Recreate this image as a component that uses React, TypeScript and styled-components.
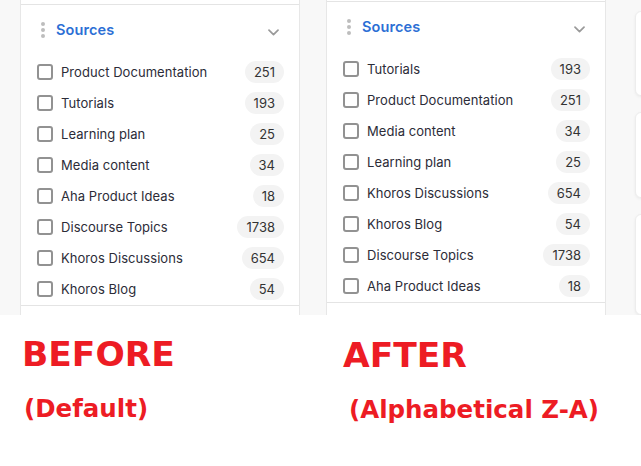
import React from "react";
import styled, { createGlobalStyle } from "styled-components";

const Global = createGlobalStyle`
  html, body { margin: 0; padding: 0; background: #ffffff; }
  body { width: 641px; height: 466px; overflow: hidden; font-family: Inter, "Noto Sans", sans-serif; }
  * { box-sizing: border-box; }
`;

const Page = styled.div`
  width: 641px;
  height: 466px;
  background: #ffffff;
  display: flex;
  flex-direction: column;
`;

const Shots = styled.div`
  display: flex;
  height: 315px;
  background: #f8f8f8;
`;

const Shot = styled.div<{ $left: number; $width?: number }>`
  display: flex;
  height: 100%;
  padding-left: ${(p) => p.$left}px;
  ${(p) => (p.$width ? `width: ${p.$width}px; flex: none;` : "flex: 1;")}
  overflow: hidden;
`;

const Panel = styled.div<{ $top: number }>`
  width: 280px;
  flex: none;
  height: 100%;
  background: #ffffff;
  border-left: 1px solid #e7e7e7;
  border-right: 1px solid #e7e7e7;
  padding-top: ${(p) => p.$top}px;
  display: flex;
  flex-direction: column;
`;

const Section = styled.div`
  border-top: 1px solid #e4e4e4;
  border-bottom: 1px solid #e4e4e4;
`;

const Header = styled.div`
  height: 50px;
  display: flex;
  align-items: center;
  padding: 0 20px 0 20px;
`;

const Dots = styled.span`
  width: 4px;
  display: flex;
  flex-direction: column;
  gap: 2.3px;
  margin-right: 11px;
  & > i {
    width: 4px;
    height: 4px;
    border-radius: 50%;
    background: #bdbdbd;
    display: block;
  }
`;

const Title = styled.span`
  flex: 1;
  color: #2c6fd5;
  font-size: 14.5px;
  font-weight: 600;
  line-height: 20px;
  letter-spacing: 0.1px;
`;

const Chevron = styled.svg`
  width: 11px;
  height: 7px;
  margin-top: 4px;
  flex: none;
`;

const List = styled.ul`
  list-style: none;
  margin: 0;
  padding: 1px 0 1px 0;
`;

const Row = styled.li`
  height: 31px;
  display: flex;
  align-items: center;
  padding: 0 15px 0 16px;
`;

const Box = styled.span`
  width: 16px;
  height: 16px;
  border: 2px solid #929292;
  border-radius: 3px;
  flex: none;
  margin-right: 8px;
`;

const Label = styled.span`
  flex: 1;
  font-size: 13px;
  color: #2c2c38;
  line-height: 18px;
  white-space: nowrap;
  letter-spacing: 0.05px;
`;

const Count = styled.span`
  height: 22px;
  padding: 0 9px;
  border-radius: 11px;
  background: #f3f3f3;
  font-size: 13px;
  color: #333333;
  display: flex;
  align-items: center;
  justify-content: center;
  flex: none;
`;

const Cards = styled.div`
  display: flex;
  flex-direction: column;
  gap: 16px;
  margin-left: 29px;
  padding-top: 11px;
  flex: none;
`;

const Card = styled.div<{ $h: number }>`
  width: 40px;
  height: ${(p) => p.$h}px;
  background: #ffffff;
  border: 1px solid #ededed;
  border-radius: 6px;
  box-shadow: 0 1px 3px rgba(0, 0, 0, 0.06);
`;

const Labels = styled.div`
  display: flex;
  padding-top: 19px;
`;

const LabelGroup = styled.div<{ $left: number; $width?: number; $top?: number }>`
  padding-left: ${(p) => p.$left}px;
  padding-top: ${(p) => p.$top ?? 0}px;
  ${(p) => (p.$width ? `width: ${p.$width}px;` : "")}
  display: flex;
  flex-direction: column;
  color: #ed1c24;
  font-family: "DejaVu Sans", sans-serif;
  font-weight: 700;
`;

const Big = styled.div`
  font-size: 34.5px;
  line-height: 40px;
  white-space: nowrap;
`;

const Sub = styled.div<{ $indent?: number; $gap: number }>`
  font-size: 24.5px;
  line-height: 28px;
  margin-top: ${(p) => p.$gap}px;
  padding-left: ${(p) => p.$indent ?? 0}px;
  white-space: nowrap;
`;

type Item = { name: string; count: number };

const before: Item[] = [
  { name: "Product Documentation", count: 251 },
  { name: "Tutorials", count: 193 },
  { name: "Learning plan", count: 25 },
  { name: "Media content", count: 34 },
  { name: "Aha Product Ideas", count: 18 },
  { name: "Discourse Topics", count: 1738 },
  { name: "Khoros Discussions", count: 654 },
  { name: "Khoros Blog", count: 54 },
];

const after: Item[] = [
  { name: "Tutorials", count: 193 },
  { name: "Product Documentation", count: 251 },
  { name: "Media content", count: 34 },
  { name: "Learning plan", count: 25 },
  { name: "Khoros Discussions", count: 654 },
  { name: "Khoros Blog", count: 54 },
  { name: "Discourse Topics", count: 1738 },
  { name: "Aha Product Ideas", count: 18 },
];

function SourcesPanel({ items, top }: { items: Item[]; top: number }) {
  return (
    <Panel $top={top}>
      <Section>
        <Header>
          <Dots>
            <i />
            <i />
            <i />
          </Dots>
          <Title>Sources</Title>
          <Chevron viewBox="0 0 11 7">
            <path d="M1 1.2 L5.5 5.6 L10 1.2" fill="none" stroke="#9a9a9a" strokeWidth="1.7" strokeLinecap="round" strokeLinejoin="round" />
          </Chevron>
        </Header>
        <List>
          {items.map((it) => (
            <Row key={it.name}>
              <Box />
              <Label>{it.name}</Label>
              <Count>{it.count}</Count>
            </Row>
          ))}
        </List>
      </Section>
    </Panel>
  );
}

export default function App() {
  return (
    <Page>
      <Global />
      <Shots>
        <Shot $left={20} $width={313}>
          <SourcesPanel items={before} top={4} />
        </Shot>
        <Shot $left={13}>
          <SourcesPanel items={after} top={1} />
          <Cards>
            <Card $h={101} />
            <Card $h={102} />
            <Card $h={120} />
          </Cards>
        </Shot>
      </Shots>
      <Labels>
        <LabelGroup $left={22} $width={343}>
          <Big>BEFORE</Big>
          <Sub $gap={21} $indent={2}>(Default)</Sub>
        </LabelGroup>
        <LabelGroup $left={0} $top={1}>
          <Big>AFTER</Big>
          <Sub $gap={21} $indent={6}>(Alphabetical Z-A)</Sub>
        </LabelGroup>
      </Labels>
    </Page>
  );
}
